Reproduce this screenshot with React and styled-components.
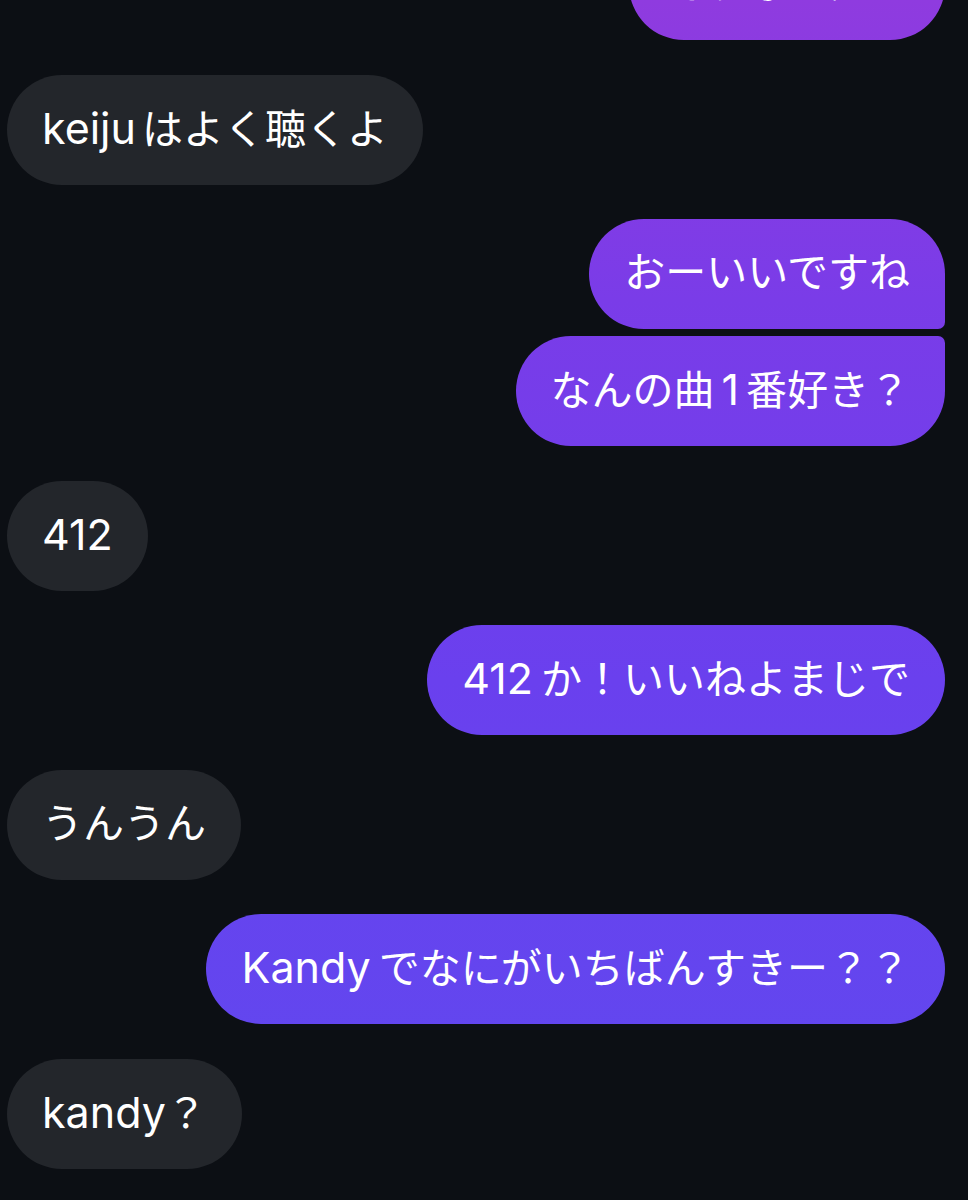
import React from "react";
import styled, { createGlobalStyle } from "styled-components";

const Global = createGlobalStyle`
  html, body {
    margin: 0;
    padding: 0;
    background: #0c0f14;
  }
  body {
    font-family: Inter, "Noto Sans CJK JP", sans-serif;
    overflow: hidden;
  }
`;

const Page = styled.div`
  width: 968px;
  height: 1200px;
  overflow: hidden;
  background: #0c0f14;
`;

const Thread = styled.div`
  display: flex;
  flex-direction: column;
  margin-top: -70px;
  padding: 0 23px 0 7px;
`;

const Row = styled.div`
  display: flex;
  justify-content: ${(p) => (p.$out ? "flex-end" : "flex-start")};
  margin-top: ${(p) => (p.$first ? "0" : p.$grouped ? "7px" : "34.5px")};
`;

const Bubble = styled.div`
  box-sizing: border-box;
  height: 110px;
  display: flex;
  align-items: baseline;
  padding: 27px 35px 0 35px;
  font-size: 41px;
  line-height: 52px;
  color: #ffffff;
  white-space: nowrap;
  border-radius: 55px;
  border-top-right-radius: ${(p) => (p.$tailTop ? "7px" : "55px")};
  border-bottom-right-radius: ${(p) => (p.$tailBottom ? "7px" : "55px")};
  background: ${(p) =>
    p.$out
      ? "linear-gradient(180deg, #8f3bdf 0px, #7a3ce8 300px, #6a40ee 680px, #5f49ef 1200px)"
      : "#23262b"};
  background-attachment: ${(p) => (p.$out ? "fixed" : "scroll")};
`;

const Latin = styled.span`
  font-size: 43px;
`;

const Kana = styled.span``;

const Gap = styled.span`
  display: inline-block;
  width: ${(p) => p.$w}px;
`;

const messages = [
  { out: true, parts: ["そうなんだね"] },
  { out: false, parts: [["keiju"], 6, "はよく聴くよ"] },
  { out: true, parts: ["おーいいですね"], tailBottom: true },
  { out: true, parts: ["なんの曲", 7, ["1"], 7, "番好き？"], grouped: true, tailTop: true },
  { out: false, parts: [["412"]] },
  { out: true, parts: [["412"], 8, "か！いいねよまじで"] },
  { out: false, parts: ["うんうん"] },
  { out: true, parts: [["Kandy"], 8, "でなにがいちばんすきー？？"] },
  { out: false, parts: [["kandy"], "？"] },
];

export default function App() {
  return (
    <Page>
      <Global />
      <Thread>
        {messages.map((m, i) => (
          <Row key={i} $out={m.out} $first={i === 0} $grouped={m.grouped}>
            <Bubble $out={m.out} $tailTop={m.tailTop} $tailBottom={m.tailBottom}>
              {m.parts.map((p, j) =>
                typeof p === "number" ? (
                  <Gap key={j} $w={p} />
                ) : Array.isArray(p) ? (
                  <Latin key={j}>{p[0]}</Latin>
                ) : (
                  <Kana key={j}>{p}</Kana>
                )
              )}
            </Bubble>
          </Row>
        ))}
      </Thread>
    </Page>
  );
}
